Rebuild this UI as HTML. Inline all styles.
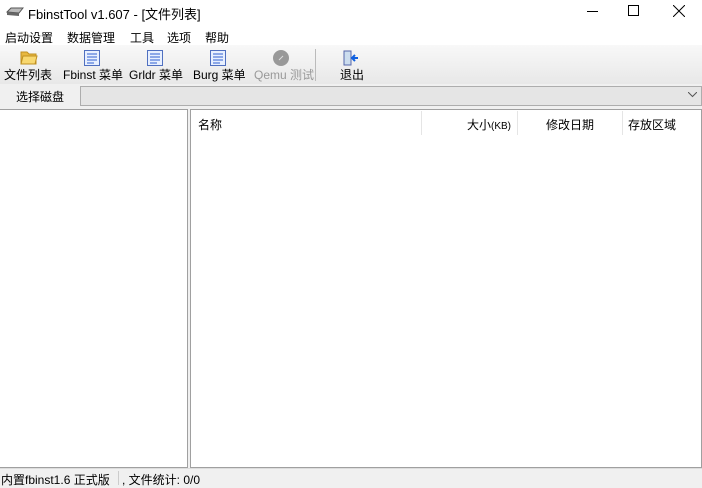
<!DOCTYPE html><html><head><meta charset="utf-8"><style>
*{margin:0;padding:0;box-sizing:border-box}
body{width:702px;height:485px;overflow:hidden;background:#f0f0f0;font-family:"Liberation Sans","Noto Sans CJK SC",sans-serif;font-size:12px;color:#000;position:relative}
.a{position:absolute;white-space:nowrap}
</style></head><body>
<div class="a" style="left:0;top:0;width:702px;height:29px;background:#fff"></div>
<svg class="a" style="left:6px;top:6px" width="18" height="12"><path d="M1 6 L5 2 L17 2 L13 7 Z" fill="#bbb" stroke="#555"/><path d="M1 6 L13 7 L13 10 L1 9Z" fill="#666"/></svg>
<div class="a" style="left:28px;top:4px;font-size:13px">FbinstTool v1.607 - [文件列表]</div>
<div class="a" style="left:587px;top:11px;width:11px;height:1px;background:#000"></div>
<div class="a" style="left:628px;top:5px;width:11px;height:11px;border:1px solid #000"></div>
<svg class="a" style="left:673px;top:5px" width="12" height="12"><path d="M0 0L12 12M12 0L0 12" stroke="#000"/></svg>
<div class="a" style="left:0;top:29px;width:702px;height:16px;background:#fff"></div>
<div class="a" style="left:5px;top:29px">启动设置</div>
<div class="a" style="left:67px;top:29px">数据管理</div>
<div class="a" style="left:130px;top:29px">工具</div>
<div class="a" style="left:167px;top:29px">选项</div>
<div class="a" style="left:205px;top:29px">帮助</div>
<div class="a" style="left:0;top:45px;width:702px;height:39px;background:linear-gradient(#f8f8f8,#e8e8e8)"></div>
<svg class="a" style="left:20px;top:49px" width="18" height="16"><path d="M1 3h6l2 2h7v10H1z" fill="#e8b840" stroke="#c09020"/><path d="M3 7h14l-2 8H1z" fill="#f8d870" stroke="#c09020"/></svg>
<svg class="a" style="left:84px;top:50px" width="16" height="16"><rect x=".5" y=".5" width="15" height="15" fill="#e8f0ff" stroke="#5070c0"/><path d="M3 4h10M3 7h10M3 10h10M3 13h7" stroke="#3060d0"/></svg>
<svg class="a" style="left:147px;top:50px" width="16" height="16"><rect x=".5" y=".5" width="15" height="15" fill="#e8f0ff" stroke="#5070c0"/><path d="M3 4h10M3 7h10M3 10h10M3 13h7" stroke="#3060d0"/></svg>
<svg class="a" style="left:210px;top:50px" width="16" height="16"><rect x=".5" y=".5" width="15" height="15" fill="#e8f0ff" stroke="#5070c0"/><path d="M3 4h10M3 7h10M3 10h10M3 13h7" stroke="#3060d0"/></svg>
<svg class="a" style="left:273px;top:50px" width="16" height="16"><circle cx="8" cy="8" r="8" fill="#999"/><path d="M6 10l4-4" stroke="#ddd"/></svg>
<div class="a" style="left:315px;top:49px;width:1px;height:32px;background:#bbb"></div>
<svg class="a" style="left:343px;top:50px" width="16" height="16"><rect x="1" y="1" width="7" height="14" fill="#cde" stroke="#56a"/><path d="M9 8h6M12 5l-3 3 3 3" stroke="#1060e0" stroke-width="2" fill="none"/></svg>
<div class="a" style="left:4px;top:66px">文件列表</div>
<div class="a" style="left:63px;top:66px">Fbinst 菜单</div>
<div class="a" style="left:129px;top:66px">Grldr 菜单</div>
<div class="a" style="left:193px;top:66px">Burg 菜单</div>
<div class="a" style="left:254px;top:66px;color:#999">Qemu 测试</div>
<div class="a" style="left:340px;top:66px">退出</div>
<div class="a" style="left:16px;top:88px">选择磁盘</div>
<div class="a" style="left:80px;top:86px;width:622px;height:20px;background:#e5e5e5;border:1px solid #adadad"></div>
<svg class="a" style="left:688px;top:92px" width="9" height="6"><path d="M0 0l4.5 4.5L9 0" stroke="#555" fill="none"/></svg>
<div class="a" style="left:0;top:109px;width:188px;height:359px;background:#fff;border:1px solid #a0a0a0;border-left:0"></div>
<div class="a" style="left:190px;top:109px;width:512px;height:359px;background:#fff;border:1px solid #a0a0a0"></div>
<div class="a" style="left:421px;top:111px;width:1px;height:24px;background:#e5e5e5"></div>
<div class="a" style="left:517px;top:111px;width:1px;height:24px;background:#e5e5e5"></div>
<div class="a" style="left:622px;top:111px;width:1px;height:24px;background:#e5e5e5"></div>
<div class="a" style="left:198px;top:116px">名称</div>
<div class="a" style="left:467px;top:116px">大小<span style="font-size:10px">(KB)</span></div>
<div class="a" style="left:546px;top:116px">修改日期</div>
<div class="a" style="left:628px;top:116px">存放区域</div>
<div class="a" style="left:0;top:468px;width:702px;height:17px;background:#f0f0f0;border-top:1px solid #ddd"></div>
<div class="a" style="left:118px;top:471px;width:1px;height:14px;background:#ccc"></div>
<div class="a" style="left:1px;top:471px">内置fbinst1.6 正式版</div>
<div class="a" style="left:122px;top:471px">, 文件统计: 0/0</div>
</body></html>
